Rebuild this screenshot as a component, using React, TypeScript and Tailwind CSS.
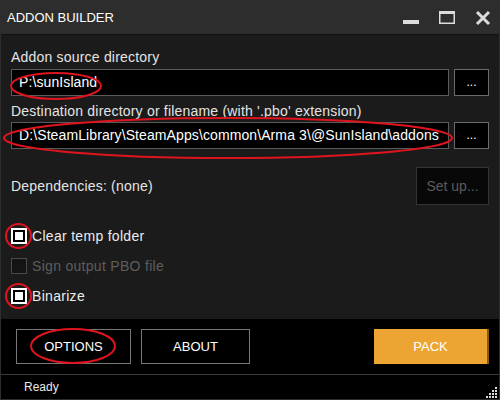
import React from "react";

function Check({ label, checked, disabled }: { label: string; checked?: boolean; disabled?: boolean }) {
  return (
    <div className="flex items-center h-[18px] gap-[5px]">
      {disabled ? (
        <div className="w-[16px] h-[16px] border border-[#4a4a4a] bg-[#141414]" />
      ) : (
        <div className="w-[16px] h-[16px] border-2 border-white bg-black flex items-center justify-center">
          {checked && <div className="w-[8px] h-[8px] bg-white" />}
        </div>
      )}
      <span className={disabled ? "text-[14px] tracking-[0.3px] text-[#5e5e5e]" : "text-[14px] tracking-[0.3px] text-[#ececec]"}>
        {label}
      </span>
    </div>
  );
}

function PathRow({ value }: { value: string }) {
  return (
    <div className="flex gap-[5px] h-[27px]">
      <div className="flex-1 border border-[#5a5a5a] bg-black flex items-center pl-[7px] text-[14px] tracking-[0.1px] text-white whitespace-nowrap overflow-hidden">
        {value}
      </div>
      <div className="w-[35px] border border-[#6a6a6a] bg-black flex items-center justify-center text-[12px] text-white leading-none pb-[2px]">
        ...
      </div>
    </div>
  );
}

export default function App() {
  return (
    <div
      className="relative w-[500px] h-[400px] flex flex-col bg-[#1b1b1b] border border-[#2d2d2d] overflow-hidden"
      style={{ fontFamily: '"Liberation Sans", Arial, sans-serif' }}
    >
      {/* title bar */}
      <div className="h-[34px] bg-[#2d2d2d] flex items-center pl-[6px] pr-[8px] border-b border-[#111]">
        <span className="text-[13px] text-white pt-[1px]">ADDON BUILDER</span>
        <div className="ml-auto flex items-center gap-[20px]">
          <svg width="16" height="16" viewBox="0 0 16 16">
            <rect x="0" y="10" width="16" height="4" fill="#dcdcdc" />
          </svg>
          <svg width="16" height="16" viewBox="0 0 16 16">
            <rect x="0.75" y="1.75" width="14.5" height="11.5" fill="none" stroke="#dcdcdc" strokeWidth="1.5" />
            <rect x="0" y="1" width="16" height="3" fill="#dcdcdc" />
          </svg>
          <svg width="16" height="16" viewBox="0 0 16 16">
            <path d="M2 2 L14 14 M14 2 L2 14" stroke="#dcdcdc" strokeWidth="3" />
          </svg>
        </div>
      </div>

      {/* main content */}
      <div className="flex-1 flex flex-col pl-[10px] pr-[10px] pt-[14px]">
        <div className="text-[14px] tracking-[0.2px] text-[#e4e4e4] leading-[16px] mb-[4px]">Addon source directory</div>
        <PathRow value="P:\sunIsland" />
        <div className="text-[14px] tracking-[0.2px] text-[#e4e4e4] leading-[16px] mt-[7px] mb-[3px]">
          Destination directory or filename (with '.pbo' extension)
        </div>
        <PathRow value="D:\SteamLibrary\SteamApps\common\Arma 3\@SunIsland\addons" />

        <div className="flex items-center mt-[18px] h-[38px]">
          <span className="text-[14px] tracking-[0.2px] text-[#e4e4e4]">Dependencies: (none)</span>
          <div className="ml-auto w-[73px] h-[38px] bg-[#080808] border border-[#333] flex items-center justify-center text-[14px] text-[#5c5c5c]">
            Set up...
          </div>
        </div>

        <div className="flex flex-col gap-[12px] mt-[22px]">
          <Check label="Clear temp folder" checked />
          <Check label="Sign output PBO file" disabled />
          <Check label="Binarize" checked />
        </div>
      </div>

      {/* bottom buttons */}
      <div className="h-[56px] bg-black flex items-start pt-[10px] pl-[15px] pr-[10px] border-b border-[#3a3a3a]">
        <div className="w-[115px] h-[35px] border border-[#777] flex items-center justify-center text-[13px] text-white">
          OPTIONS
        </div>
        <div className="w-[109px] h-[35px] ml-[10px] border border-[#777] flex items-center justify-center text-[13px] text-white">
          ABOUT
        </div>
        <div className="ml-auto w-[115px] h-[35px] bg-[#eca532] border-r-2 border-[#8a5a14] flex items-center justify-center text-[13px] text-white">
          PACK
        </div>
      </div>

      {/* status bar */}
      <div className="h-[24px] bg-black flex items-center pl-[23px] relative">
        <span className="text-[12px] text-[#e8e8e8]">Ready</span>
        <svg className="absolute right-[1px] bottom-[1px]" width="12" height="12" viewBox="0 0 12 12">
          <rect x="9" y="1" width="2" height="2" fill="#ddd" />
          <rect x="6" y="4" width="2" height="2" fill="#ddd" />
          <rect x="9" y="4" width="2" height="2" fill="#ddd" />
          <rect x="3" y="7" width="2" height="2" fill="#ddd" />
          <rect x="6" y="7" width="2" height="2" fill="#ddd" />
          <rect x="9" y="7" width="2" height="2" fill="#ddd" />
          <rect x="0" y="10" width="2" height="2" fill="#ddd" />
          <rect x="3" y="10" width="2" height="2" fill="#ddd" />
          <rect x="6" y="10" width="2" height="2" fill="#ddd" />
          <rect x="9" y="10" width="2" height="2" fill="#ddd" />
        </svg>
      </div>

      {/* red annotation marks */}
      <svg className="absolute left-[-1px] top-[-1px] pointer-events-none" width="500" height="400" viewBox="0 0 500 400">
        <g fill="none" stroke="#e0141e" strokeWidth="2">
          <ellipse cx="56" cy="86" rx="45" ry="13" />
          <ellipse cx="228" cy="138" rx="224" ry="20" />
          <ellipse cx="18.5" cy="236" rx="12.5" ry="12" />
          <ellipse cx="18.5" cy="296" rx="12.5" ry="12" />
          <ellipse cx="73" cy="346" rx="42" ry="17" />
        </g>
      </svg>
    </div>
  );
}
